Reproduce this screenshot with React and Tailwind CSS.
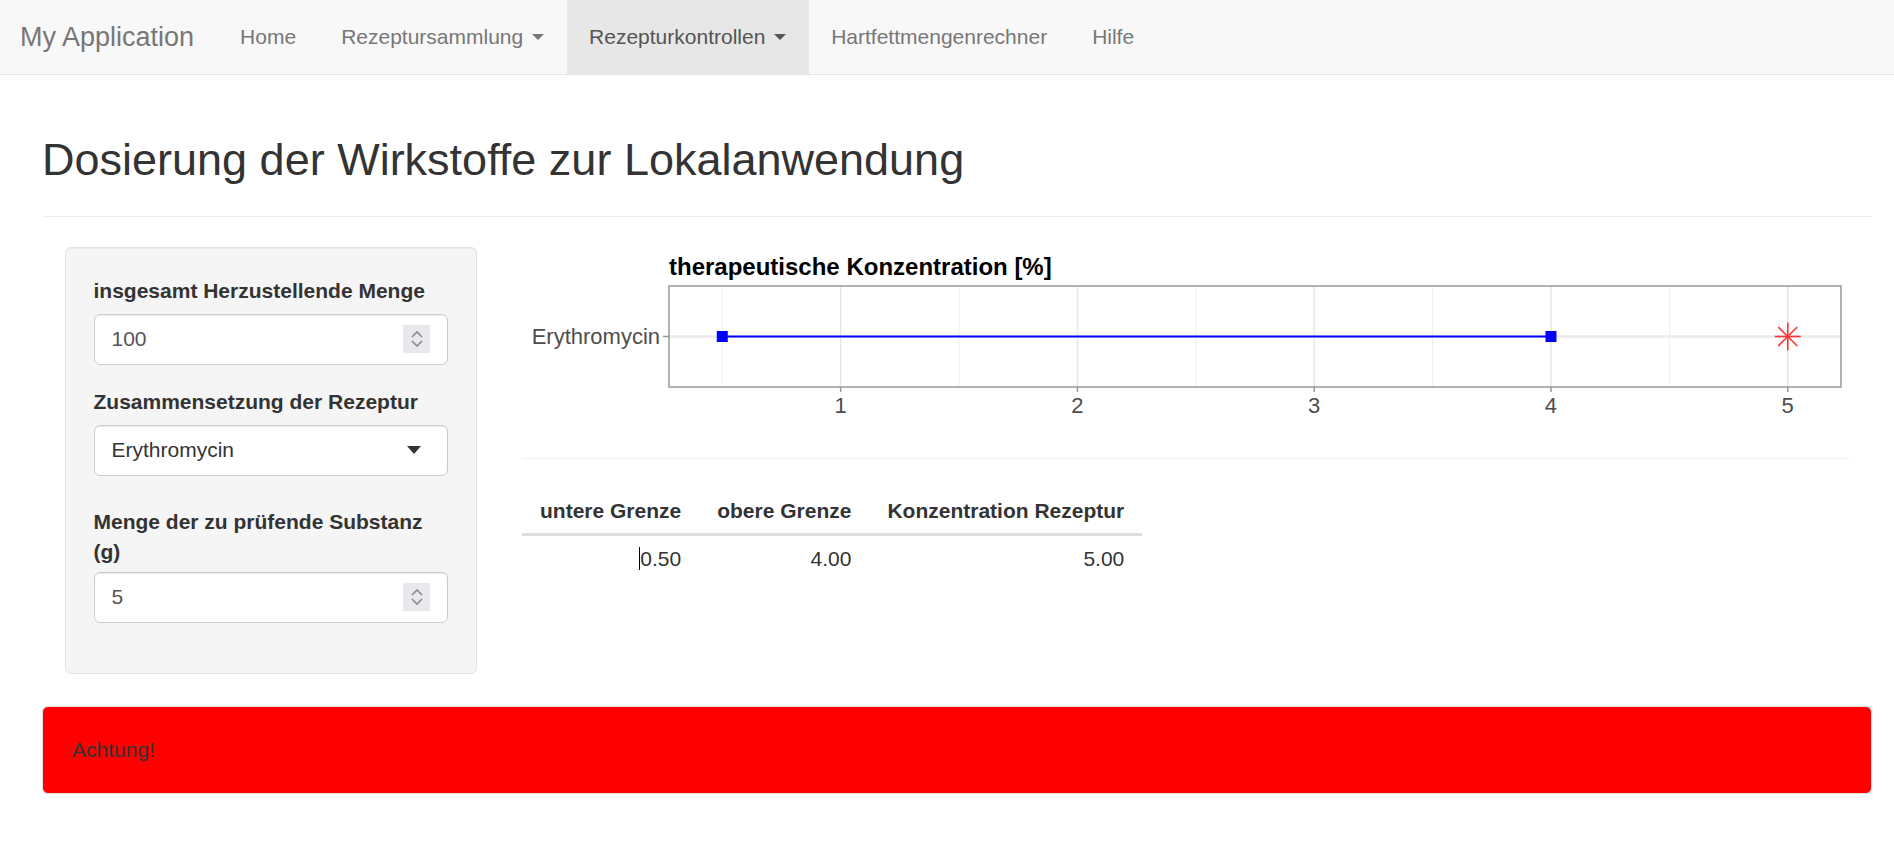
import React from "react";

const NAV = [
  { label: "Home" },
  { label: "Rezeptursammlung", caret: true },
  { label: "Rezepturkontrollen", caret: true, active: true },
  { label: "Hartfettmengenrechner" },
  { label: "Hilfe" },
];

// plot scale: x range 0.275 .. 5.225 over 1172px, panel starts at 147
const px = (v) => 147 + (v - 0.275) * 236.77;

function Caret() {
  return (
    <span className="inline-block w-0 h-0 ml-[3px] align-middle border-t-[6px] border-t-current border-x-[6px] border-x-transparent" />
  );
}

function Spinner() {
  return (
    <span className="w-[27px] h-[28px] bg-[#e9e9ed] flex flex-col items-center justify-center gap-[2px]">
      <svg width="12" height="8" viewBox="0 0 12 8" fill="none" stroke="#8d8d8d" strokeWidth="1.6">
        <path d="M1 7 L6 2 L11 7" />
      </svg>
      <svg width="12" height="8" viewBox="0 0 12 8" fill="none" stroke="#8d8d8d" strokeWidth="1.6">
        <path d="M1 1 L6 6 L11 1" />
      </svg>
    </span>
  );
}

function NumberInput({ value }) {
  return (
    <div className="h-[51px] bg-white border border-[#ccc] rounded-[6px] flex items-center justify-between pl-[17px] pr-[17px] text-[21px] text-[#555] shadow-[inset_0_1px_1px_rgba(0,0,0,0.075)]">
      <span>{value}</span>
      <Spinner />
    </div>
  );
}

function Plot() {
  const majors = [1, 2, 3, 4, 5];
  const minors = [0.5, 1.5, 2.5, 3.5, 4.5];
  const cy = 89.5;
  const sx = px(5);
  return (
    <svg width="1327" height="181" viewBox="0 0 1327 181" fontFamily="'Liberation Sans', Arial, sans-serif">
      <text x="147" y="28" fontSize="24" fontWeight="bold" fill="#000">
        therapeutische Konzentration [%]
      </text>
      <rect x="147" y="39" width="1172" height="101" fill="#fff" />
      {minors.map((v) => (
        <line key={"m" + v} x1={px(v)} x2={px(v)} y1="39" y2="140" stroke="#eeeeee" strokeWidth="1" />
      ))}
      {majors.map((v) => (
        <line key={"M" + v} x1={px(v)} x2={px(v)} y1="39" y2="140" stroke="#e6e6e6" strokeWidth="1.5" />
      ))}
      <line x1="147" x2="1319" y1={cy} y2={cy} stroke="#ebebeb" strokeWidth="2.5" />
      <line x1={px(0.5)} x2={px(4)} y1={cy} y2={cy} stroke="#0000ff" strokeWidth="2" />
      <rect x={px(0.5) - 5.5} y={cy - 5.5} width="11" height="11" fill="#0000ff" />
      <rect x={px(4) - 5.5} y={cy - 5.5} width="11" height="11" fill="#0000ff" />
      <g stroke="#ff3333" strokeWidth="1.6">
        <line x1={sx} x2={sx} y1={cy - 14} y2={cy + 14} />
        <line x1={sx - 13} x2={sx + 13} y1={cy} y2={cy} />
        <line x1={sx - 9.5} x2={sx + 9.5} y1={cy - 9.5} y2={cy + 9.5} />
        <line x1={sx - 9.5} x2={sx + 9.5} y1={cy + 9.5} y2={cy - 9.5} />
      </g>
      <rect x="147" y="39" width="1172" height="101" fill="none" stroke="#999999" strokeWidth="1.5" />
      <line x1="141" x2="147" y1={cy} y2={cy} stroke="#999999" strokeWidth="1.5" />
      <text x="138" y="97" fontSize="22" fill="#4d4d4d" textAnchor="end">
        Erythromycin
      </text>
      {majors.map((v) => (
        <g key={"t" + v}>
          <line x1={px(v)} x2={px(v)} y1="140" y2="145" stroke="#999999" strokeWidth="1.5" />
          <text x={px(v)} y="166" fontSize="22" fill="#4d4d4d" textAnchor="middle">
            {v}
          </text>
        </g>
      ))}
    </svg>
  );
}

export default function App() {
  return (
    <div className="min-h-screen bg-white font-['Liberation_Sans',Arial,sans-serif] text-[#333]">
      {/* Navbar */}
      <nav className="h-[75px] bg-[#f8f8f8] border-b border-[#e7e7e7] flex items-stretch">
        <a className="flex items-center pl-[20px] pr-[23.5px] text-[27px] text-[#777]">My Application</a>
        <ul className="flex items-stretch">
          {NAV.map((n) => (
            <li
              key={n.label}
              className={
                n.active
                  ? "flex items-center px-[22.5px] text-[21px] bg-[#e7e7e7] text-[#555]"
                  : "flex items-center px-[22.5px] text-[21px] text-[#777]"
              }
            >
              {n.label}
              {n.caret && (
                <>
                  <span>&nbsp;</span>
                  <Caret />
                </>
              )}
            </li>
          ))}
        </ul>
      </nav>

      <main className="pl-[42px] pr-[22px]">
        <h2 className="mt-[60px] text-[45px] leading-[49.5px] font-normal text-[#333]">
          Dosierung der Wirkstoffe zur Lokalanwendung
        </h2>
        <div className="mt-[31px] h-px bg-[#eeeeee]" />

        <div className="mt-[30.5px] flex items-start">
          {/* Sidebar */}
          <div className="w-[457.5px] px-[22.5px] shrink-0">
            <div className="bg-[#f5f5f5] border border-[#e3e3e3] rounded-[6px] p-[28px] shadow-[inset_0_1px_1px_rgba(0,0,0,0.05)]">
              <div className="mb-[22.5px]">
                <label className="block font-bold text-[21px] leading-[30px] mb-[7.5px]">
                  insgesamt Herzustellende Menge
                </label>
                <NumberInput value="100" />
              </div>
              <div className="mb-[31px]">
                <label className="block font-bold text-[21px] leading-[30px] mb-[7.5px]">
                  Zusammensetzung der Rezeptur
                </label>
                <div className="h-[51px] bg-white border border-[#ccc] rounded-[6px] flex items-center justify-between pl-[17px] pr-[26px] text-[21px] text-[#333] shadow-[inset_0_1px_1px_rgba(0,0,0,0.075)]">
                  <span>Erythromycin</span>
                  <span className="w-0 h-0 border-t-[8px] border-t-[#333] border-x-[7px] border-x-transparent" />
                </div>
              </div>
              <div className="mb-[22.5px]">
                <label className="block font-bold text-[21px] leading-[30px] mb-[5px]">
                  Menge der zu prüfende Substanz (g)
                </label>
                <NumberInput value="5" />
              </div>
            </div>
          </div>

          {/* Main */}
          <div className="flex-1 px-[22.5px]">
            <Plot />
            <div className="mt-[30px] h-px bg-[#eeeeee]" />
            <table className="mt-[29px] border-collapse text-[21px] text-[#333]">
              <thead>
                <tr className="border-b-[3px] border-[#ddd]">
                  <th className="px-[18px] py-[7.5px] leading-[30px] text-right font-bold">untere Grenze</th>
                  <th className="px-[18px] py-[7.5px] leading-[30px] text-right font-bold">obere Grenze</th>
                  <th className="px-[18px] py-[7.5px] leading-[30px] text-right font-bold">Konzentration Rezeptur</th>
                </tr>
              </thead>
              <tbody>
                <tr>
                  <td className="px-[18px] py-[7.5px] leading-[30px] text-right">
                    <span className="border-l border-black">0.50</span>
                  </td>
                  <td className="px-[18px] py-[7.5px] leading-[30px] text-right">4.00</td>
                  <td className="px-[18px] py-[7.5px] leading-[30px] text-right">5.00</td>
                </tr>
              </tbody>
            </table>
          </div>
        </div>

        <div className="mt-[32px] bg-[#ff0000] border border-[#e3e3e3] rounded-[6px] px-[29px] py-[28px] text-[21px] leading-[30px] text-[#333]">
          Achtung!
        </div>
      </main>
    </div>
  );
}
